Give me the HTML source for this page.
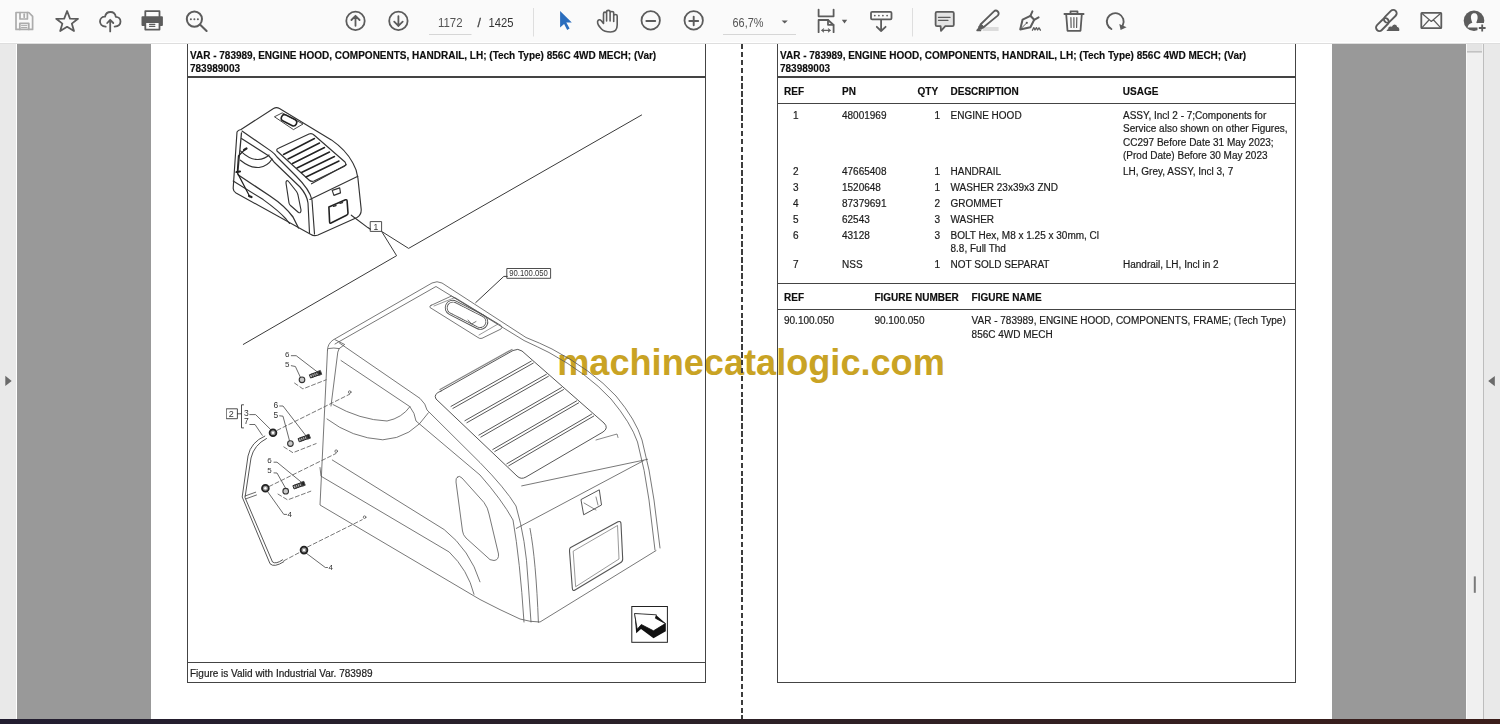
<!DOCTYPE html>
<html><head><meta charset="utf-8">
<style>
*{margin:0;padding:0;box-sizing:border-box}
html,body{width:1500px;height:724px;overflow:hidden;background:#999;font-family:"Liberation Sans",sans-serif}
.a{position:absolute}
#tb{left:0;top:0;width:1500px;height:44px;background:linear-gradient(180deg,#fafafa 0 42px,#fff 42px);border-bottom:1px solid #dedede}
#lp{left:0;top:44px;width:17px;height:675px;background:#e9e9e9;border-right:1px solid #fff}
#gl{left:17px;top:44px;width:134px;height:675px;background:#999}
#pg{left:151px;top:44px;width:1181px;height:675px;background:#fff}
#gr{left:1332px;top:44px;width:134px;height:675px;background:#999}
#sb{left:1466px;top:44px;width:18px;height:675px;background:#f0f0f0;border-left:1px solid #fafafa;border-right:1px solid #bdbdbd}
#rp{left:1484px;top:44px;width:16px;height:675px;background:#e9e9e9}
#bot{left:0;top:719px;width:1500px;height:5px;background:linear-gradient(90deg,#221d30,#2b2128 45%,#3b1d1a)}
.t{position:absolute;white-space:nowrap;filter:grayscale(1);font-size:10px;line-height:13px;color:#1c1c1c;-webkit-text-stroke:0.2px #1c1c1c}
.b{font-weight:bold;color:#0e0e0e;-webkit-text-stroke:0.15px #0e0e0e}
.ln{position:absolute;background:#444}
svg{position:absolute;left:0;top:0;filter:grayscale(1)}
svg.c{filter:none}
</style></head><body>
<div id="tb" class="a"></div>
<div id="lp" class="a"></div>
<div id="gl" class="a"></div>
<div id="pg" class="a"></div>
<div id="gr" class="a"></div>
<div id="sb" class="a"></div>
<div id="rp" class="a"></div>
<div id="bot" class="a"></div>

<!-- toolbar icons -->
<svg width="1500" height="44" viewBox="0 0 1500 44" style="left:0;top:0">
<rect x="982.6" y="27" width="16" height="4" fill="#dcdcdc"/>
<g fill="none" stroke="#5c5c5c" stroke-width="1.8" stroke-linejoin="round" stroke-linecap="round">
 <!-- save -->
 <g stroke="#acacac" stroke-width="1.7">
  <path d="M16,12.5 H28.8 L32.6,16.4 V29.4 H16 Z"/>
  <path d="M20,12.5 V19 H27.4 V12.5"/>
  <path d="M24.2,14.2 V17.2"/>
  <path d="M19.8,29.4 V23.3 H28.8 V29.4"/>
  <path d="M21.5,25.6 H27 M21.5,27.5 H27" stroke-width="1"/>
 </g>
 <!-- star -->
 <path d="M67.1,11 L70,18.6 L78,18.8 L71.8,23.6 L74,31 L67.1,26.8 L60.2,31 L62.4,23.6 L56.2,18.8 L64.2,18.6 Z"/>
 <!-- cloud upload -->
 <path d="M105.7,26.6 C101.8,26.4 99.9,23.8 100,21.3 C100.2,18.5 102.4,16.6 105,16.7 C105.6,13.9 107.8,12 110.5,12 C113.4,12 115.4,14.2 115.8,16.8 C118.5,16.8 120.5,19 120.5,21.6 C120.5,24.3 118.4,26.5 114.6,26.6"/>
 <path d="M110.2,20 V31.4 M107.2,23 L110.2,19.8 L113.3,23"/>
 <!-- printer -->
 <path d="M145.3,16.4 V11.2 H159.5 V16.4"/>
 <path d="M145.3,25 H142.4 V17.2 H162 V25 H159.5" fill="#5c5c5c"/>
 <path d="M145.3,22 H159.5 V29.6 H145.3 Z" fill="#fafafa"/>
 <path d="M149.6,24.4 H154.8 M149.6,26.4 H154.8" stroke-width="1.2"/>
 <!-- search -->
 <circle cx="194.4" cy="19.1" r="7.6" stroke-width="2"/>
 <path d="M200.2,24.8 L206.6,31" stroke-width="2.1"/>
 <circle cx="190.9" cy="19.2" r="1" fill="#5c5c5c" stroke="none"/>
 <circle cx="194.4" cy="19.2" r="1" fill="#5c5c5c" stroke="none"/>
 <circle cx="197.9" cy="19.2" r="1" fill="#5c5c5c" stroke="none"/>
 <!-- up / down -->
 <circle cx="355.5" cy="20.9" r="9.2"/>
 <path d="M355.5,15.8 V25.8 M351.4,20 L355.5,15.8 L359.6,20"/>
 <circle cx="398.4" cy="20.9" r="9.2"/>
 <path d="M398.4,16.2 V26 M394.2,21.7 L398.4,25.9 L402.7,21.7"/>
 <!-- hand -->
 <path d="M601.5,29 C599.5,27 597.3,23.5 597.6,21.5 C598,19.5 600,19.3 601.3,20.8 L603.5,23.5 L603.5,13.8 C603.5,11.6 606.6,11.6 606.6,13.8 L606.6,21 L606.6,12 C606.6,9.8 610.1,9.8 610.1,12 L610.1,21 L610.1,13 C610.1,11 613.7,11 613.7,13 L613.7,21.5 L613.7,16 C613.7,14 617.2,14 617.2,16 L617.2,25 C617.2,29.5 614.5,32 610.5,32 C606.5,32 604,31.5 601.5,29 Z" stroke-width="1.6"/>
 <!-- minus / plus -->
 <circle cx="650.7" cy="20.4" r="9.2"/>
 <path d="M646.4,21 H655.2" stroke-width="2"/>
 <circle cx="693.7" cy="20.4" r="9.2"/>
 <path d="M689.3,21 H698.2 M693.7,16.6 V25.2" stroke-width="1.9"/>
 <!-- fit page -->
 <path d="M818.6,9.6 V16.3 H833.6 V9.6"/>
 <path d="M818.6,32.2 V20 H828 L833.6,25 V32.2"/>
 <path d="M828,20 V24.8 H833.4"/>
 <path d="M822,30.3 H830" stroke-width="1.3"/>
 <path d="M823.6,28.8 L821.9,30.3 L823.6,31.8 M828.4,28.8 L830.1,30.3 L828.4,31.8" stroke-width="1.1"/>
 <!-- keyboard -->
 <rect x="871" y="11.8" width="20.5" height="7.6" rx="1.2"/>
 <path d="M881.1,20 V31 M876.8,26.8 L881.1,31 L885.6,26.8"/>
 <!-- comment -->
 <path d="M937,11.8 H952.4 Q953.8,11.8 953.8,13.2 V24.8 Q953.8,26.2 952.4,26.2 H945.3 L941,30.8 L940.6,26.2 H937 Q935.6,26.2 935.6,24.8 V13.2 Q935.6,11.8 937,11.8 Z" fill="#e4e4e4"/>
 <path d="M938.5,17.4 H950 M938.5,20.3 H948" stroke-width="1.3"/>
 <!-- highlighter -->
 <path d="M983.5,27.3 L980.5,24.5 L993.7,11.6 C995,10.3 996.6,10.3 997.8,11.5 C999,12.7 999,14.3 997.7,15.6 Z"/>
 <path d="M980.8,24.8 L983.2,27.2 L981,28.9 L979,27 Z" fill="#5c5c5c"/>
 <path d="M979.6,27.6 L977.2,30.3 L980.4,30.4" fill="#5c5c5c"/>
 <!-- pen -->
 <path d="M1020.2,29.4 L1022.6,19.6 L1030.4,15.8 L1034.2,19.8 L1030.4,27.2 Z" stroke-width="2"/>
 <path d="M1030.4,15.8 L1032.4,11.4 M1034.2,19.8 L1038.6,17.4" stroke-width="2"/>
 <path d="M1020.8,28.8 L1026.6,23" stroke-width="1"/>
 <circle cx="1026.8" cy="22.8" r="1.1" fill="#5c5c5c" stroke="none"/>
 <path d="M1032.4,30.2 L1033.8,27.6 L1035,30 L1036.4,27.6 L1037.6,30 L1039,27.8 L1040.4,30.2" stroke-width="1.3"/>
 <!-- trash -->
 <path d="M1064.4,14 H1083.6 M1070.5,13.8 V11.4 H1077.5 V13.8"/>
 <path d="M1066.2,14.2 L1067.5,30.8 H1080.5 L1081.8,14.2"/>
 <path d="M1070.9,17.6 L1071.1,27.4 M1073.9,17.6 V27.4 M1076.8,17.6 L1076.6,27.4" stroke-width="1.2"/>
 <!-- rotate -->
 <path d="M1111.4,29 A8.4,8.4 0 1 1 1122.8,25.2" stroke-width="1.9"/>
 <!-- link -->
 <rect x="-7.6" y="-3.4" width="15.2" height="6.8" rx="3.4" transform="translate(1390.3 16.3) rotate(-45)" stroke-width="1.9"/>
 <rect x="-7.6" y="-3.4" width="15.2" height="6.8" rx="3.4" transform="translate(1382.4 24.6) rotate(-45)" stroke-width="1.9"/>
 <!-- mail -->
 <rect x="1421.3" y="12.8" width="20" height="15.4" rx="0.6"/>
 <path d="M1421.8,13.3 L1431.3,21.5 L1440.8,13.3 M1421.8,27.8 L1428.5,20.5 M1440.8,27.8 L1434,20.5" stroke-width="1.2"/>
 <!-- plus of user -->
</g>
<g fill="#5c5c5c">
  <path d="M1119.3,24 L1126.6,27.3 L1120.6,29.9 Z"/>
 <path d="M841.8,19.8 H847.2 L844.5,23.4 Z"/>
 <path d="M781.6,20.5 H787.8 L784.7,23.6 Z"/>
 <circle cx="874.8" cy="15.6" r="0.9"/><circle cx="878.9" cy="15.6" r="0.9"/><circle cx="882.9" cy="15.6" r="0.9"/><circle cx="887.1" cy="15.6" r="0.9"/>
 <path d="M1386.8,31.6 C1385.6,31.4 1385.8,29 1387.6,28.8 C1387.6,26.6 1389.8,25.3 1391.6,26 C1392.6,23.4 1396.8,23.2 1397.6,26.4 C1399.6,26.6 1400.6,29.2 1399.6,31.6 Z" stroke="#fafafa" stroke-width="1.2"/>
 <circle cx="1474" cy="20.8" r="10.3"/>
 <path d="M1474.3,13.3 C1471.2,13.3 1470.8,16 1471,18.3 C1471.2,20.2 1472,21.6 1472.3,22.8 C1469.5,23.6 1467.8,25.3 1467.6,27.6 L1480.5,27.6 C1480.5,25.5 1479.2,23.6 1476.3,22.8 C1476.6,21.6 1477.4,20.2 1477.6,18.3 C1477.8,16 1477.4,13.3 1474.3,13.3 Z" fill="#fafafa"/>
 <rect x="1477.5" y="23" width="9.5" height="9.5" fill="#fafafa"/>
 <path d="M1478.8,28 H1485.6 M1482.2,24.6 V31.4" stroke="#5c5c5c" stroke-width="1.8"/>
</g>
<!-- page number area -->
<path d="M429,34.5 H471.5 M723,34.5 H796" stroke="#d6d6d6" stroke-width="1"/>
<path d="M533.5,8 V36.5 M912.5,8 V36.5" stroke="#dedede" stroke-width="1"/>
<text x="438" y="26.6" font-family="Liberation Sans" font-size="12.2" fill="#555" textLength="24.6" lengthAdjust="spacingAndGlyphs">1172</text>
<text x="477.5" y="26.6" font-family="Liberation Sans" font-size="12.2" fill="#444" stroke="#444" stroke-width="0.3">/</text>
<text x="488.5" y="26.6" font-family="Liberation Sans" font-size="12.2" fill="#333" textLength="25" lengthAdjust="spacingAndGlyphs">1425</text>
<text x="732.5" y="26.6" font-family="Liberation Sans" font-size="12.2" fill="#555" textLength="31" lengthAdjust="spacingAndGlyphs">66,7%</text>
</svg>
<svg class="c" width="1500" height="44" style="left:0;top:0"><path d="M560.1,11.1 L571.8,22.4 L566.3,22.6 L569.6,28.6 L567.2,29.9 L564.1,23.9 L560.1,27.6 Z" fill="#2a6dbd"/>
</svg>
<!-- side ui -->
<svg width="1500" height="724" style="left:0;top:0">
 <path d="M5.3,375.7 L11.7,380.9 L5.3,386 Z" fill="#6a6a6a"/>
 <path d="M1494.8,376 L1488.2,381.1 L1494.8,386.2 Z" fill="#6a6a6a"/>
 <rect x="1467" y="44" width="15" height="7.5" fill="#e4e4e4"/>
 <rect x="1467" y="51" width="15" height="1.6" fill="#c2c2c2"/>
 <rect x="1473.8" y="576.4" width="2" height="16.4" fill="#7a7a7a"/>
</svg>
<!-- watermark -->
<div class="a" style="left:557.2px;top:342.2px;font-size:36.15px;font-weight:bold;color:#c9a324;white-space:nowrap;line-height:42px">machinecatalogic.com</div>

<!-- drawing -->
<svg width="1500" height="724" style="left:0;top:0">
<g fill="none" stroke="#3a3a3a" stroke-width="1" stroke-linejoin="round" stroke-linecap="round">
 <!-- long leader lines -->
 <path d="M381.6,231.4 L408.6,248.4 L641.6,115"/>
 <path d="M382,232 L396.6,255.7 L243.3,344.4"/>
  <rect x="370.6" y="221.6" width="11" height="9.8" stroke-width="0.9"/>
 <rect x="507.2" y="268.5" width="43.4" height="9.8" stroke-width="0.9"/>
 <path d="M475.7,302.6 L503.8,276.4 L507.2,276.4"/>
 <rect x="226.6" y="408.8" width="10.8" height="9.9" stroke-width="0.9"/>
 <path d="M237.4,413.8 H241.5 M243.5,404.8 H241.5 V427.9 H243.5" stroke-width="0.9"/>
</g>
<g font-family="Liberation Sans" fill="#333">
 <text x="373.5" y="229.6" font-size="8.5">1</text>
 <text x="509.3" y="276" font-size="8.6" textLength="38.6" lengthAdjust="spacingAndGlyphs">90.100.050</text>
 <text x="228.8" y="417" font-size="9">2</text>
 <text x="244" y="415.5" font-size="8.5">3</text>
 <text x="244" y="424" font-size="8.5">7</text>
 <text x="285" y="356.5" font-size="8">6</text>
 <text x="285" y="366.5" font-size="8">5</text>
 <text x="273.5" y="408" font-size="8.4">6</text>
 <text x="273.5" y="418" font-size="8.4">5</text>
 <text x="267.2" y="462.5" font-size="8">6</text>
 <text x="267.2" y="473" font-size="8">5</text>
 <text x="287.5" y="516.5" font-size="8">4</text>
 <text x="328.5" y="569.5" font-size="8">4</text>
</g>
<!-- small hood -->
<g fill="none" stroke="#333" stroke-width="1.15" stroke-linejoin="round" stroke-linecap="round">
 <path d="M237,132 Q238,130 241,129.5 L273.5,108.5 Q276.5,106.8 279.5,108.5 L306.6,125 L331.4,139.9 Q346,150 352.9,163 Q357,170 357.9,178 L361.2,209.4 Q361.5,215 357,217.5 L318,235 Q314,236.5 311,234.5 L236,193 Q233,191 233.2,188 Z"/>
 <path d="M242,131 L271.5,151.4 Q275,154 277,157 L296,176 Q310,190 312,200 L314.5,234"/>
 <path d="M241.5,138.5 L268.9,156 Q272,159 274,162 L300,187 Q307,195 308,203 L309.5,233"/>
 <path d="M241.5,132.8 L237.8,172.6" stroke-width="1.3"/>
 <path d="M240.4,150.9 Q250,160 258,159.5 Q265,159 269,155"/>
 <path d="M240.4,160.2 Q250,168 259,167.5 Q268,166 272,159"/>
 <path d="M238,174.7 L270,196 Q285,206 293,217 L298.5,228" stroke-width="1.3"/>
 <path d="M233.2,181 L263.2,199.6 Q279,211 286,219 L289.5,223.5"/>
 <path d="M309.9,199.5 L357.9,176.3"/>
 <path d="M311.5,183.8 L346.3,164.7"/>
 <path d="M277,151 Q276,149 279,148 L309,134 Q312,133 314,135 L345,162 Q347,165 344,166.5 L314,181 Q311,182 309,180 Z"/>
 <path d="M283.5,154.5 L314.5,138.5 M288,159 L319.5,143 M292.5,163.5 L324.5,147.5 M297,168 L329.5,152 M301.5,172.5 L334.5,156.5 M306,177 L339,161" stroke-width="1.5" stroke="#222"/>
 <path d="M274.8,116.6 L282.2,112.9 L303,124 L293.8,129.4 Z" stroke-width="0.9"/>
 <rect x="-8.2" y="-3.3" width="16.4" height="6.6" rx="3.3" transform="translate(289 120.3) rotate(27)" stroke-width="1.6" stroke="#222"/>
 <path d="M332.2,190.4 L339.7,187.9 L340.5,192.9 L333.9,195.4 Z"/>
 <path d="M328.9,207 L345.5,199.8 Q347,199.3 347.1,201 L348,213 Q348,214.6 346.5,215.2 L331,223 Q329.7,223.6 329.6,222 Z" stroke-width="1.6" stroke="#222"/>
 <path d="M333.5,206.3 L336,205.5 M340,203.3 L342.5,202.5" stroke-width="1.4"/>
 <path d="M286.5,181 Q287.5,180 289,182 L296.5,191.5 Q297.5,193 298,195 L301,210 Q301,213.5 298.5,212.5 L290.5,205.5 Q289.3,204.5 289,203 L286,183 Q286,181.5 286.5,181 Z"/>
 <path d="M245,149.3 L238.4,156 L237.3,172.6 L249.7,196.5" stroke-width="1.2" stroke="#222"/>
 <path d="M244,150 L246.5,148.5 M236.5,172 L240,171.5 M249,196 L251.5,197" stroke-width="2.2" stroke="#222"/>
 <path d="M351.3,215.2 L367.8,227.6 L370.4,229.2"/>
</g>
<!-- big hood -->
<g fill="none" stroke="#555" stroke-width="0.8" stroke-linejoin="round" stroke-linecap="round">
 <!-- top outline -->
 <path d="M327.5,350 Q327.5,344 333,340 L432,283 Q437,280.5 442,283 L526,337.5 Q540,343 552,349 Q592,370 616,396 Q636,420 642,440 Q650,470 654,500 L660,548"/>
 <path d="M335,344 L436,286.5 L524,340.5 Q538,347 549,352.5 Q587,373 611,399 Q631,423 637.5,442 Q645,470 649,500 L655,550"/>
 <!-- front corner -->
 <path d="M327.5,350 L320,505 L480,599.5 Q500,610 520,619 Q530,622 540,622 L656,550.6"/>
 <path d="M328.5,348.5 Q334,347.5 339.2,348.6 L337.8,352.1 L331,406"/>
 <path d="M335,339.7 L344.7,344.5 L339.2,348.6"/>
 <!-- front-left top edges (double) -->
 <path d="M339.4,343 L420,398.4 Q426,404 427,410 L480,462.6 Q505,488 516,506 Q526,540 528,580 L531,622"/>
 <path d="M341,360.5 L409.8,406.6 Q415,413 416,421 L480,475 Q502,500 513,520 Q520,560 524,622"/>
 <!-- fender curves -->
 <path d="M333,404.6 Q360,420 387,421 Q402,418 410,406.6"/>
 <path d="M327,419 Q352,438 382.8,439.8 Q412,438 428.4,412.8"/>
 <!-- lower stripes -->
 <path d="M320,467.5 L321,476.2 L449.2,552 Q468,570 474,594.3"/>
 <path d="M332.3,460 L444.2,529.6 Q470,550 480,581.8"/>
 <!-- side window -->
 <path d="M457.5,477 Q459,475 462,478 L484,502.5 Q488,508 489,514 L498.5,554 Q499,560 494,560.5 Q490,561 486,556 L466,538 Q463,535 462.5,531 L456,482 Q455.5,478 457.5,477 Z"/>
 <!-- rear face -->
 <path d="M516.3,528.4 L643.5,460.7"/>
 <path d="M521.7,485.9 L647.6,459.3"/>
 <path d="M530,528.4 Q536,560 538.4,622.4"/>
 <path d="M570.2,547.8 L618,521.8 Q621,520.5 621,524 L622.7,559 Q622.7,562 620,563 L575,590 Q572.5,591.5 572.3,588 L569.5,551 Q569.5,548.5 570.2,547.8 Z" stroke-width="1.1"/>
 <path d="M573.5,551 L617.5,525.5 L619,559 L576,586.5 Z" stroke-width="0.6"/>
 <path d="M581.3,499.4 L599.3,489.8 L601.5,505 L584,514.6 Z" stroke-width="1"/>
 <path d="M584,503 L596,510 M596,497 L598,505" stroke-width="0.7"/>
 <path d="M596,440 L617,434 L618,437.5" stroke-width="0.7"/>
 <!-- hatch -->
 <path d="M431,305.4 L451.5,296 L501,325.5 Q503,327.5 501,329 L482,338.3 Q479.7,339 478,337.5 L430,307.5 Q429,306.3 431,305.4 Z"/>
 <path d="M434,306 L455,297.5 L498,324 L479,335" stroke-width="0.6"/>
 <rect x="-23" y="-7.5" width="46" height="15" rx="7.5" transform="translate(466.5 314.8) rotate(27)" stroke-width="0.9"/>
 <rect x="-21" y="-5.8" width="42" height="11.6" rx="5.8" transform="translate(466.5 314.8) rotate(27)" stroke-width="0.9" stroke-dasharray="1.5 0.8"/>
 <path d="M468,320 L471.5,324 L476,321.5" stroke-width="0.8"/>
 <!-- grille -->
 <path d="M441,391 L513,350.5 Q518,348 522,351 L604,423 Q609,428 603,432 L526,477 Q521,480 517,476 L436,399 Q433,394 441,391 Z" stroke="#444" stroke-width="0.9"/>
 <path d="M451.0,406.4 L531.3,361.1 M452.9,408.4 L533.3,363.1 M464.9,420.7 L546.4,374.3 M466.9,422.7 L548.4,376.3 M478.9,435.1 L561.5,387.6 M480.8,437.1 L563.5,389.6 M492.8,449.5 L576.6,400.9 M494.8,451.5 L578.6,402.9 M506.8,463.8 L591.7,414.1 M508.7,465.8 L593.7,416.1" stroke="#444" stroke-width="0.9"/>
 <path d="M440,389.5 L512,349.5" stroke="#888" stroke-width="1.3"/>
 <!-- holes -->
 <circle cx="349.7" cy="392.1" r="1.3"/>
 <circle cx="336.2" cy="451.2" r="1.3"/>
 <circle cx="364.6" cy="517.2" r="1.3"/>
</g>
<!-- hardware -->
<g fill="none" stroke="#444" stroke-width="0.8" stroke-linecap="round">
 <path d="M291.3,355.7 L296.2,355.7 L317.8,372.3"/>
 <path d="M291.3,365.7 L295.4,366.5 L301.2,379"/>
 <path d="M279.7,406 L283,406 L306.2,436.1"/>
 <path d="M279.7,415.8 L283,416.2 L289.6,441.1"/>
 <path d="M249.8,414.6 L255.6,414.6 L271.4,430.3"/>
 <path d="M249.8,424.5 L255,424.5 L262.3,435.3"/>
 <path d="M274,462.2 L277,462.2 L303,483.5"/>
 <path d="M274,472.9 L277,473 L286.7,490.2"/>
 <path d="M267.3,491.2 L283.8,514.4 L286.7,514.4"/>
 <path d="M306,553 L325.3,567.5 L327.5,567.5"/>
 <!-- dashed -->
 <g stroke-dasharray="4 2.5" stroke="#555">
  <path d="M294.6,383.1 L302.9,388.9 L326.1,379.8"/>
  <path d="M283.8,446.9 L292.9,452.7 L316.1,443.6"/>
  <path d="M278,494.1 L287.6,499.9 L310.8,491.2"/>
  <path d="M277.2,430.3 L349.7,394.2"/>
  <path d="M269.3,486.4 L336,453.5"/>
  <path d="M307.5,547 L362.2,519.7"/>
  <path d="M283.8,560.8 L304,550.1"/>
 </g>
 <!-- handrail tube -->
 <path d="M264.8,436.1 Q251,442 248,456 L242.2,497 L270,563.7 Q274,568 283.8,561.7" stroke-width="0.9"/>
 <path d="M266.5,438.5 Q254,445 251,458 L245,497.5 L272.5,562 Q276,564.5 282.6,559.8" stroke-width="0.9"/>
 <path d="M245,496 L255.7,492.2 M246,498.8 L256.5,495" stroke-width="0.8"/>
 <!-- washers / grommets -->
 <circle cx="302" cy="379.8" r="2.8" fill="#c8c8c8" stroke="#333" stroke-width="1.1"/>
 <circle cx="290.4" cy="443.6" r="2.8" fill="#c8c8c8" stroke="#333" stroke-width="1.1"/>
 <circle cx="285.7" cy="491.2" r="2.8" fill="#c8c8c8" stroke="#333" stroke-width="1.1"/>
 <circle cx="273" cy="432.8" r="3.4" fill="#999" stroke="#222" stroke-width="1.8"/>
 <circle cx="265.4" cy="488.3" r="3.4" fill="#999" stroke="#222" stroke-width="1.8"/>
 <circle cx="304" cy="550.1" r="3.4" fill="#999" stroke="#222" stroke-width="1.8"/>
 <circle cx="273" cy="432.8" r="1.2" fill="#fff" stroke="none"/>
 <circle cx="265.4" cy="488.3" r="1.2" fill="#fff" stroke="none"/>
 <circle cx="304" cy="550.1" r="1.2" fill="#fff" stroke="none"/>
 <!-- bolts -->
 <g transform="translate(315.5 374.4) rotate(-20)"><rect x="-5.5" y="-1.7" width="9" height="3.4" fill="#aaa" stroke="#222" stroke-width="0.9"/><rect x="3.5" y="-2.1" width="2.4" height="4.2" fill="#222"/><path d="M-3.5,-1.7 V1.7 M-1.5,-1.7 V1.7 M0.5,-1.7 V1.7 M2.5,-1.7 V1.7" stroke="#222" stroke-width="0.7"/></g>
 <g transform="translate(304.2 438.2) rotate(-20)"><rect x="-5.5" y="-1.7" width="9" height="3.4" fill="#aaa" stroke="#222" stroke-width="0.9"/><rect x="3.5" y="-2.1" width="2.4" height="4.2" fill="#222"/><path d="M-3.5,-1.7 V1.7 M-1.5,-1.7 V1.7 M0.5,-1.7 V1.7 M2.5,-1.7 V1.7" stroke="#222" stroke-width="0.7"/></g>
 <g transform="translate(299 485.3) rotate(-20)"><rect x="-5.5" y="-1.7" width="9" height="3.4" fill="#aaa" stroke="#222" stroke-width="0.9"/><rect x="3.5" y="-2.1" width="2.4" height="4.2" fill="#222"/><path d="M-3.5,-1.7 V1.7 M-1.5,-1.7 V1.7 M0.5,-1.7 V1.7 M2.5,-1.7 V1.7" stroke="#222" stroke-width="0.7"/></g>
</g>
<!-- view arrow icon -->
<rect x="631.8" y="606.5" width="35.6" height="35.8" fill="none" stroke="#222" stroke-width="1"/>
<path d="M634.5,613.5 L636.2,633.2 L641,629 L653.5,638.2 L665.8,631.2 L665.8,623.5 L656,615 Z" fill="#111"/>
<path d="M634.5,613.5 L656.4,614.8 L655.4,618.2 L665.3,623.6 L653.5,630.8 L641.3,624.5 L637.2,629.2 Z" fill="#fff" stroke="#111" stroke-width="0.8" stroke-linejoin="round"/>
</svg>
<!-- page frames -->
<div class="ln" style="left:187px;top:44px;width:1px;height:639px"></div>
<div class="ln" style="left:705px;top:44px;width:1px;height:639px"></div>
<div class="ln" style="left:187px;top:76px;width:519px;height:1.5px"></div>
<div class="ln" style="left:187px;top:662px;width:519px;height:1px"></div>
<div class="ln" style="left:187px;top:682px;width:519px;height:1px"></div>

<div class="ln" style="left:777px;top:44px;width:1px;height:639px"></div>
<div class="ln" style="left:1295px;top:44px;width:1px;height:639px"></div>
<div class="ln" style="left:777px;top:76px;width:519px;height:1.5px"></div>
<div class="ln" style="left:777px;top:103px;width:519px;height:1px"></div>
<div class="ln" style="left:777px;top:283px;width:519px;height:1px"></div>
<div class="ln" style="left:777px;top:309px;width:519px;height:1px"></div>
<div class="ln" style="left:777px;top:682px;width:519px;height:1px"></div>
<div class="a" style="left:741px;top:44px;width:1.5px;height:675px;background:repeating-linear-gradient(180deg,#3c3c3c 0 5.5px,transparent 5.5px 7.9px)"></div>

<!-- left page text -->
<div class="t b" style="left:190px;top:48.8px">VAR - 783989, ENGINE HOOD, COMPONENTS, HANDRAIL, LH; (Tech Type) 856C 4WD MECH; (Var)</div>
<div class="t b" style="left:190px;top:62.1px">783989003</div>
<div class="t" style="left:190px;top:667.4px">Figure is Valid with Industrial Var. 783989</div>
<!-- right page text -->
<div class="t b" style="left:780px;top:48.8px">VAR - 783989, ENGINE HOOD, COMPONENTS, HANDRAIL, LH; (Tech Type) 856C 4WD MECH; (Var)</div>
<div class="t b" style="left:780px;top:62.1px">783989003</div>
<div class="t b" style="left:784px;top:85.1px">REF</div>
<div class="t b" style="left:842px;top:85.1px">PN</div>
<div class="t b" style="left:917.5px;top:85.1px">QTY</div>
<div class="t b" style="left:950.5px;top:85.1px">DESCRIPTION</div>
<div class="t b" style="left:1122.8px;top:85.1px">USAGE</div>
<div class="t" style="left:793px;top:109.0px">1</div>
<div class="t" style="left:842px;top:109.0px">48001969</div>
<div class="t" style="left:900px;width:40.1px;text-align:right;top:109.0px">1</div>
<div class="t" style="left:950.5px;top:109.0px;line-height:13.3px">ENGINE HOOD</div>
<div class="t" style="left:1123px;top:109.0px;line-height:13.3px">ASSY, Incl 2 - 7;Components for<br>Service also shown on other Figures,<br>CC297 Before Date 31 May 2023;<br>(Prod Date) Before 30 May 2023</div>
<div class="t" style="left:793px;top:165.0px">2</div>
<div class="t" style="left:842px;top:165.0px">47665408</div>
<div class="t" style="left:900px;width:40.1px;text-align:right;top:165.0px">1</div>
<div class="t" style="left:950.5px;top:165.0px;line-height:13.3px">HANDRAIL</div>
<div class="t" style="left:1123px;top:165.0px;line-height:13.3px">LH, Grey, ASSY, Incl 3, 7</div>
<div class="t" style="left:793px;top:180.9px">3</div>
<div class="t" style="left:842px;top:180.9px">1520648</div>
<div class="t" style="left:900px;width:40.1px;text-align:right;top:180.9px">1</div>
<div class="t" style="left:950.5px;top:180.9px;line-height:13.3px">WASHER 23x39x3 ZND</div>
<div class="t" style="left:793px;top:196.9px">4</div>
<div class="t" style="left:842px;top:196.9px">87379691</div>
<div class="t" style="left:900px;width:40.1px;text-align:right;top:196.9px">2</div>
<div class="t" style="left:950.5px;top:196.9px;line-height:13.3px">GROMMET</div>
<div class="t" style="left:793px;top:212.7px">5</div>
<div class="t" style="left:842px;top:212.7px">62543</div>
<div class="t" style="left:900px;width:40.1px;text-align:right;top:212.7px">3</div>
<div class="t" style="left:950.5px;top:212.7px;line-height:13.3px">WASHER</div>
<div class="t" style="left:793px;top:228.6px">6</div>
<div class="t" style="left:842px;top:228.6px">43128</div>
<div class="t" style="left:900px;width:40.1px;text-align:right;top:228.6px">3</div>
<div class="t" style="left:950.5px;top:228.6px;line-height:13.3px">BOLT Hex, M8 x 1.25 x 30mm, Cl<br>8.8, Full Thd</div>
<div class="t" style="left:793px;top:257.9px">7</div>
<div class="t" style="left:842px;top:257.9px">NSS</div>
<div class="t" style="left:900px;width:40.1px;text-align:right;top:257.9px">1</div>
<div class="t" style="left:950.5px;top:257.9px;line-height:13.3px">NOT SOLD SEPARAT</div>
<div class="t" style="left:1123px;top:257.9px;line-height:13.3px">Handrail, LH, Incl in 2</div>
<div class="t b" style="left:784px;top:290.7px">REF</div>
<div class="t b" style="left:874.4px;top:290.7px">FIGURE NUMBER</div>
<div class="t b" style="left:971.6px;top:290.7px">FIGURE NAME</div>
<div class="t" style="left:784px;top:314.4px">90.100.050</div>
<div class="t" style="left:874.4px;top:314.4px">90.100.050</div>
<div class="t" style="left:971.6px;top:314.4px;line-height:13.3px">VAR - 783989, ENGINE HOOD, COMPONENTS, FRAME; (Tech Type)<br>856C 4WD MECH</div>

</body></html>
